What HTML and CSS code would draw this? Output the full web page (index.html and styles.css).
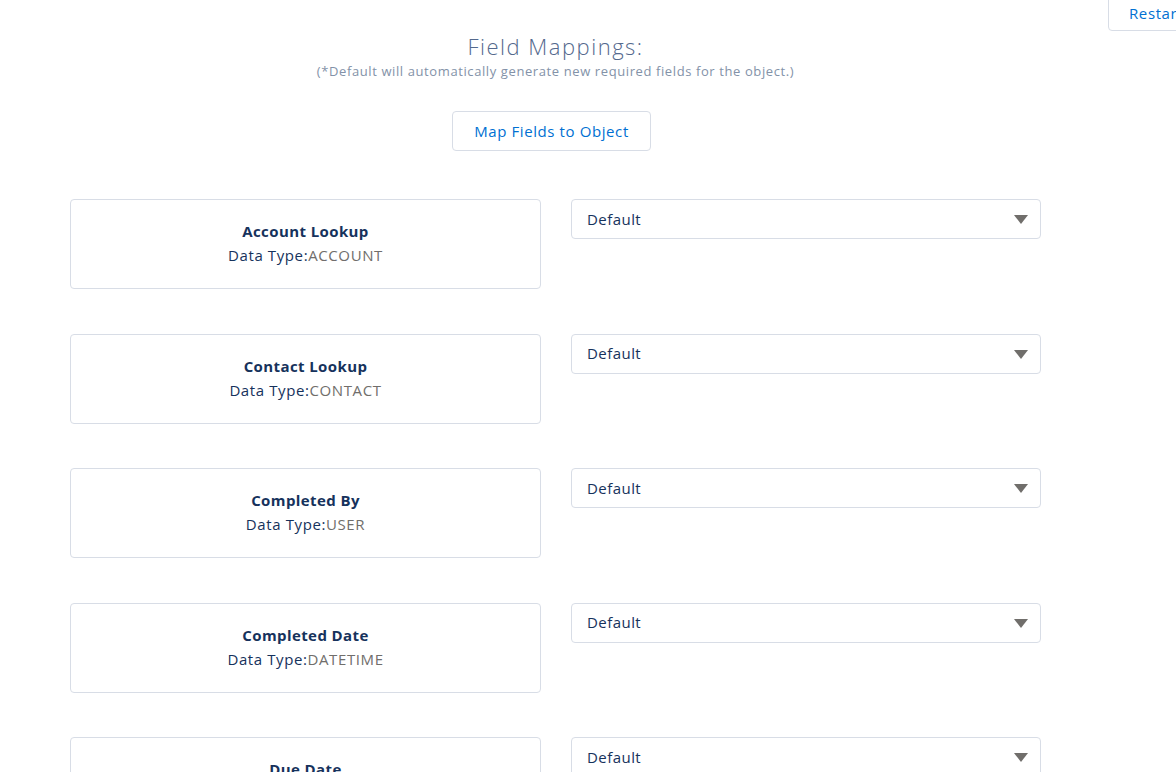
FILE: index.html
```html
<!DOCTYPE html>
<html>
<head>
<meta charset="utf-8">
<link rel="stylesheet" href="styles.css">
</head>
<body>
<div class="topbar">
  <button class="btn restart">Restart</button>
</div>
<main class="page">
  <header class="head">
    <h1 class="title">Field Mappings:</h1>
    <p class="subtitle">(*Default will automatically generate new required fields for the object.)</p>
    <button class="btn map">Map Fields to Object</button>
  </header>
  <section class="rows">
    <div class="row">
      <div class="card"><div class="name">Account Lookup</div><div class="type">Data Type:<span>ACCOUNT</span></div></div>
      <div class="select"><span>Default</span><i class="caret"></i></div>
    </div>
    <div class="row">
      <div class="card"><div class="name">Contact Lookup</div><div class="type">Data Type:<span>CONTACT</span></div></div>
      <div class="select"><span>Default</span><i class="caret"></i></div>
    </div>
    <div class="row">
      <div class="card"><div class="name">Completed By</div><div class="type">Data Type:<span>USER</span></div></div>
      <div class="select"><span>Default</span><i class="caret"></i></div>
    </div>
    <div class="row">
      <div class="card"><div class="name">Completed Date</div><div class="type">Data Type:<span>DATETIME</span></div></div>
      <div class="select"><span>Default</span><i class="caret"></i></div>
    </div>
    <div class="row">
      <div class="card"><div class="name">Due Date</div><div class="type">Data Type:<span>DATE</span></div></div>
      <div class="select"><span>Default</span><i class="caret"></i></div>
    </div>
  </section>
</main>
</body>
</html>
```
FILE: styles.css
```css
html, body {
  margin: 0;
  padding: 0;
  background: #fff;
  overflow: hidden;
}
body {
  font-family: "Open Sans", "Liberation Sans", sans-serif;
  color: #16325c;
  width: 1176px;
  height: 772px;
}
.topbar {
  height: 0;
  display: flex;
  padding-left: 1108px;
}
.btn {
  font-family: inherit;
  background: #fff;
  border: 1px solid #d8dde6;
  border-radius: 4px;
  color: #0070d2;
  font-size: 15px;
  letter-spacing: 0.6px;
  cursor: pointer;
}
.restart {
  flex: none;
  margin-top: -6px;
  height: 37px;
  width: 100px;
  padding: 0 0 0 20px;
  text-align: left;
}
.page {
  width: 1111px;
  padding-top: 30px;
}
.head {
  display: flex;
  flex-direction: column;
  align-items: center;
}
.title {
  margin: 0;
  font-size: 22px;
  font-weight: 300;
  letter-spacing: 1.5px;
  color: #54698d;
  line-height: 32px;
}
.subtitle {
  margin: 0;
  font-size: 13px;
  letter-spacing: 0.6px;
  color: #8392a8;
  line-height: 18px;
}
.map {
  margin-top: 31px;
  margin-right: 8px;
  width: 199px;
  height: 40px;
  padding: 0;
}
.rows {
  margin-top: 48px;
  padding-left: 70px;
  display: flex;
  flex-direction: column;
  gap: 44.5px;
}
.row {
  display: flex;
  align-items: flex-start;
  gap: 30px;
}
.card {
  width: 469px;
  height: 86px;
  border: 1px solid #d8dde6;
  border-radius: 4px;
  display: flex;
  flex-direction: column;
  align-items: center;
  justify-content: center;
  padding-bottom: 2px;
  box-sizing: content-box;
}
.name {
  font-weight: 700;
  font-size: 15px;
  letter-spacing: 0.4px;
  line-height: 24px;
  color: #16325c;
}
.type {
  font-size: 15px;
  letter-spacing: 0.6px;
  line-height: 24px;
  color: #16325c;
}
.type span {
  color: #706e6b;
}
.select {
  border: 1px solid #d8dde6;
  border-radius: 4px;
  display: flex;
  align-items: center;
  justify-content: space-between;
  padding: 0 12px 0 15px;
  box-sizing: border-box;
  width: 470px;
  height: 40px;
  font-size: 15px;
  letter-spacing: 0.45px;
  color: #16325c;
  line-height: 18px;
  padding-bottom: 1px;
}
.caret {
  width: 0;
  height: 0;
  border-left: 7px solid transparent;
  border-right: 7px solid transparent;
  border-top: 9px solid #706e6b;
  margin-top: 2px;
}
```
